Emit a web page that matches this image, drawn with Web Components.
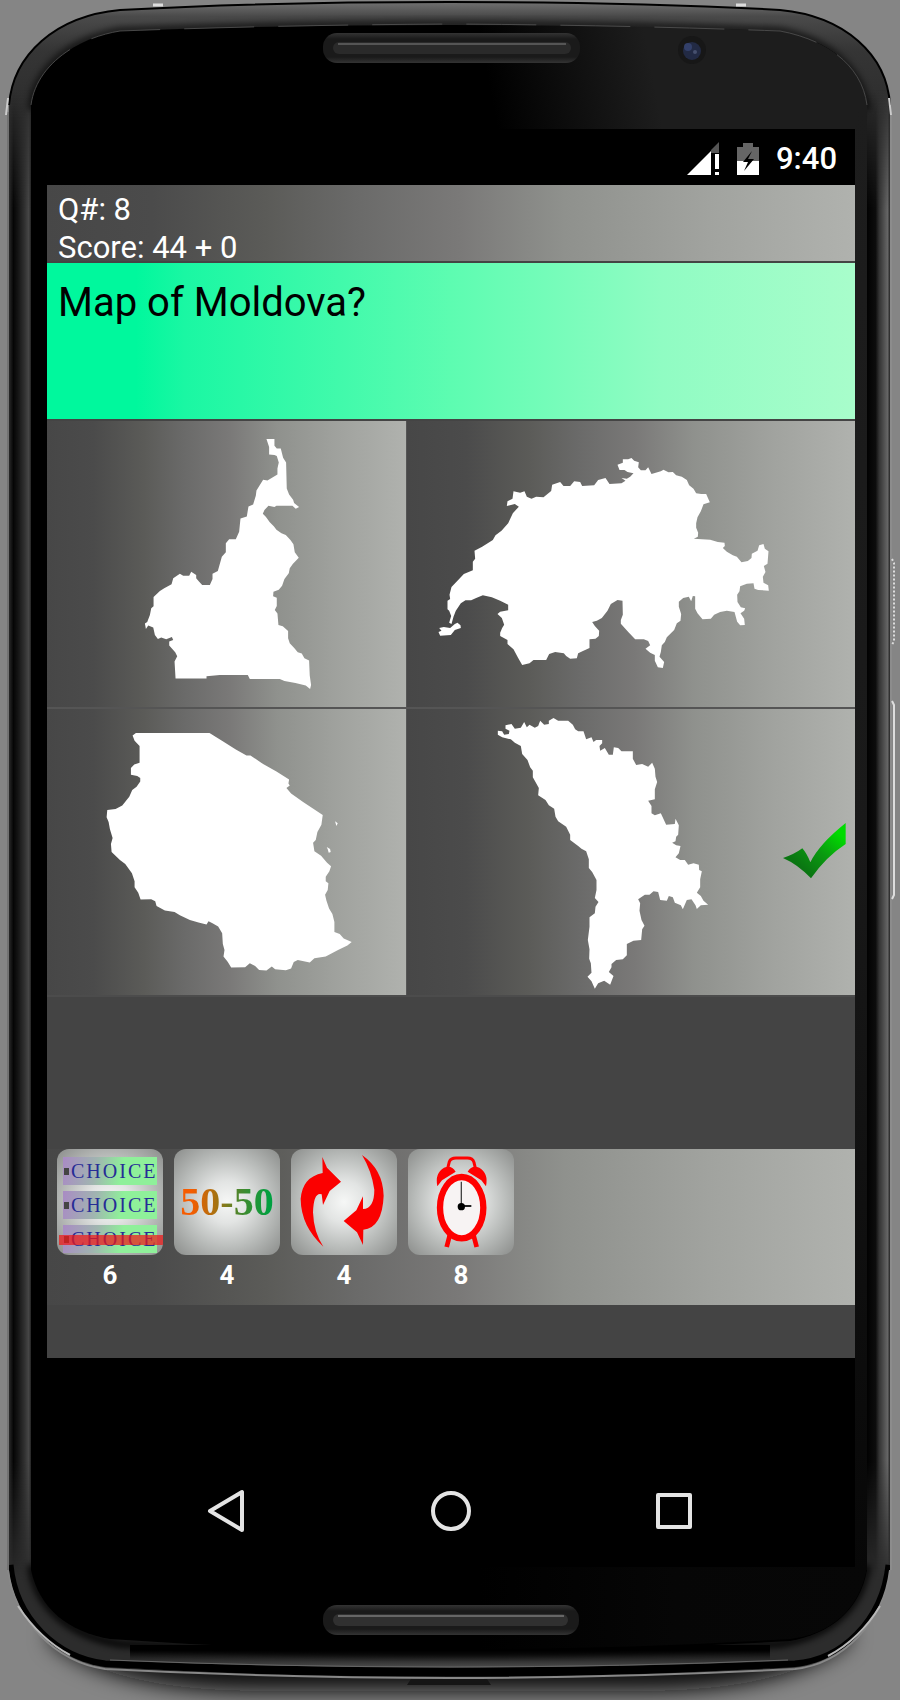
<!DOCTYPE html>
<html lang="en">
<head>
<meta charset="utf-8">
<title>Map quiz</title>
<style>
body { margin: 0; background: #858585; font-family: Roboto, "Liberation Sans", sans-serif; color: #fff; }
</style>
</head>
<body>
<phone-frame>
  <status-bar>9:40</status-bar>
  <quiz-app>
    <score-board slot="score" question="8" points="44" bonus="0"></score-board>
    <quiz-question slot="question">Map of Moldova?</quiz-question>
    <answer-grid slot="answers"></answer-grid>
    <tool-bar slot="tools">
      <tool-button label="Remove a choice" count="6" kind="choice"></tool-button>
      <tool-button label="Fifty-fifty" count="4" kind="half"></tool-button>
      <tool-button label="Swap question" count="4" kind="swap"></tool-button>
      <tool-button label="Extra time" count="8" kind="time"></tool-button>
    </tool-bar>
  </quiz-app>
  <nav-bar></nav-bar>
</phone-frame>

<script>
const GRAY = 'linear-gradient(90deg,#474747 0%,#4b4b4b 13%,#5b5b58 27%,#6a6a69 38%,#7a7978 51%,#8f918d 64%,#a1a39f 82%,#b0b2ae 100%)';
const RESET = ':host,*{box-sizing:border-box} button{appearance:none;border:0;padding:0;margin:0;background:none;color:inherit;font:inherit;cursor:pointer} svg{display:block}';

function define(name, render) {
  customElements.define(name, class extends HTMLElement {
    constructor() { super(); this.attachShadow({ mode: 'open' }); }
    connectedCallback() { this.shadowRoot.innerHTML = render(this); }
  });
}

define('phone-frame', () => `
<style>${RESET}
:host{display:block;position:relative;overflow:hidden}
.body{position:absolute;inset:0;width:100%;height:100%}
.screen{position:relative;display:flex;flex-direction:column;padding:129px 45px 133px 47px}
</style>
<svg class="body" viewBox="0 0 900 1700" preserveAspectRatio="none" aria-hidden="true">
  <defs>
    <filter id="b6" x="-20%" y="-100%" width="140%" height="300%"><feGaussianBlur stdDeviation="11"/></filter>
    <filter id="b3"><feGaussianBlur stdDeviation="3"/></filter>
    <linearGradient id="topband" x1="0" x2="0" y1="0" y2="1700" gradientUnits="userSpaceOnUse">
      <stop offset="0" stop-color="#777"/><stop offset=".0095" stop-color="#4a4a4a"/><stop offset=".03" stop-color="#353535"/><stop offset=".07" stop-color="#2c2c2c"/><stop offset="1" stop-color="#2c2c2c"/>
    </linearGradient>
    <linearGradient id="lside"><stop offset="0" stop-color="#2a2a2a"/><stop offset=".2" stop-color="#050505"/><stop offset=".4" stop-color="#141414"/><stop offset=".7" stop-color="#303030"/><stop offset=".9" stop-color="#474747"/><stop offset="1" stop-color="#222"/></linearGradient>
    <linearGradient id="rside"><stop offset="0" stop-color="#000"/><stop offset=".4" stop-color="#0c0c0c"/><stop offset=".55" stop-color="#333"/><stop offset=".9" stop-color="#666"/><stop offset="1" stop-color="#222"/></linearGradient>
    <linearGradient id="fade" x1="0" x2="0" y1="0" y2="1"><stop offset="0" stop-color="#000"/><stop offset=".08" stop-color="#fff"/><stop offset=".92" stop-color="#fff"/><stop offset="1" stop-color="#000"/></linearGradient>
    <mask id="sidefade"><rect x="0" y="90" width="900" height="1490" fill="url(#fade)"/></mask>
    <linearGradient id="sheen" x1="490" x2="650" y1="90" y2="60" gradientUnits="userSpaceOnUse"><stop offset="0" stop-color="#1d1d1d" stop-opacity="0"/><stop offset="1" stop-color="#1d1d1d"/></linearGradient>
    <linearGradient id="strip" x1="0" x2="0" y1="0" y2="1"><stop offset="0" stop-color="#1d1d1d"/><stop offset=".5" stop-color="#191919"/><stop offset="1" stop-color="#070707"/></linearGradient>
    <linearGradient id="chin"><stop offset="0" stop-color="#000"/><stop offset=".5" stop-color="#060606"/><stop offset="1" stop-color="#070707"/></linearGradient>
    <linearGradient id="slot" x1="0" x2="0" y1="0" y2="1"><stop offset="0" stop-color="#333"/><stop offset=".2" stop-color="#1a1a1a"/><stop offset=".8" stop-color="#1a1a1a"/><stop offset="1" stop-color="#333"/></linearGradient>
    <linearGradient id="lower" x1="0" x2="0" y1="1650" y2="1668" gradientUnits="userSpaceOnUse"><stop offset="0" stop-color="#000"/><stop offset="1" stop-color="#505050"/></linearGradient>
    <clipPath id="outer"><path d="M9 105C13 55 55 16 120 10Q260 2 450 2Q640 2 780 10C845 16 887 55 890 105V1570C884 1622 842 1662 795 1667Q620 1677 450 1677Q280 1677 105 1667C56 1660 14 1620 9 1570Z"/></clipPath>
  </defs>
  <rect width="900" height="1700" fill="#858585"/>
  <path d="M50 1640Q110 1691 260 1691H640Q790 1691 850 1640L830 1560H70Z" fill="#0a0a0a" filter="url(#b6)"/>
  <rect x="7" y="112" width="3" height="1458" fill="#727272"/><rect x="889" y="112" width="3" height="1458" fill="#8c8c8c"/>
  <path d="M9 105C13 55 55 16 120 10Q260 2 450 2Q640 2 780 10C845 16 887 55 890 105V1570C884 1622 842 1662 795 1667Q620 1677 450 1677Q280 1677 105 1667C56 1660 14 1620 9 1570Z" fill="url(#topband)"/>
  <g clip-path="url(#outer)">
    <g mask="url(#sidefade)"><rect x="9" y="90" width="22" height="1490" fill="url(#lside)"/><rect x="866" y="90" width="24" height="1490" fill="url(#rside)"/></g>
    <path d="M130 1645H770V1672H130Z" fill="url(#lower)"/>
    <path d="M890 1565C884 1622 842 1662 795 1665Q620 1672 450 1672Q280 1672 105 1665C56 1659 14 1620 9 1565" fill="none" stroke="#000" stroke-width="9"/>
    <path d="M867 110C862 70 828 40 780 31Q620 24 450 24Q280 24 120 31C72 40 36 66 31 110" fill="none" stroke="#000" stroke-width="8" opacity=".6" filter="url(#b3)"/>
    <path d="M867 1565C862 1608 828 1636 780 1644Q620 1652 450 1652Q280 1652 120 1644C72 1636 36 1608 31 1565" fill="none" stroke="#000" stroke-width="8" opacity=".8" filter="url(#b3)"/>
  </g>
  <path d="M31 105C36 66 76 38 120 31Q280 25 450 25Q620 25 780 31C828 40 862 66 867 105V1570C860 1610 830 1634 790 1641Q620 1651 450 1651Q280 1651 110 1639C68 1632 39 1608 31 1570Z" fill="#000"/>
  <path d="M480 26Q640 25 780 31C828 40 862 66 867 105V129H480Z" fill="url(#sheen)"/>
  <rect x="855" y="104" width="12" height="1466" fill="url(#strip)"/>
  <path d="M480 1567H867C860 1610 830 1634 790 1639Q620 1649 480 1649Z" fill="url(#chin)"/>
  <path d="M31 105C36 66 76 38 120 31Q280 25 450 24Q620 25 780 31C828 40 862 66 867 105" fill="none" stroke="#555" stroke-width="1" stroke-dasharray="70 24" opacity=".8"/>
  <path d="M9 105C13 55 55 16 120 10Q260 2 450 2Q640 2 780 10C845 16 887 55 890 105" fill="none" stroke="#000" stroke-width="2"/>
  <path d="M153 5h10M736 5h10" stroke="#ddd" stroke-width="3"/>
  <path d="M8 98L6 115M889 98l2 17" stroke="#ccc" stroke-width="2"/>
  <path d="M890 1570C884 1622 842 1664 795 1669Q620 1678 450 1678Q280 1678 105 1669C56 1662 14 1620 8 1570" fill="none" stroke="#888" stroke-width="2"/>
  <path d="M70 1655Q40 1639 18 1606M828 1656Q860 1639 880 1606" fill="none" stroke="#b8b8b8" stroke-width="2"/>
  <path d="M110 1660Q280 1667 450 1667Q620 1667 788 1660" fill="none" stroke="#666" stroke-width="1"/>
  <path d="M411 1679H487L491 1685H407Z" fill="#151515"/>
  <g><rect x="323" y="33" width="257" height="30" rx="14" fill="url(#slot)"/><rect x="333" y="42" width="238" height="12" rx="6" fill="#2a2a2a"/><path d="M338 44H566" stroke="#555" stroke-width="2"/></g>
  <g><rect x="323" y="1605" width="256" height="30" rx="14" fill="url(#slot)"/><rect x="333" y="1614" width="235" height="12" rx="6" fill="#303030"/><path d="M338 1616H564" stroke="#666" stroke-width="2"/></g>
  <circle cx="692" cy="50" r="14" fill="#171717"/><circle cx="692" cy="51" r="9" fill="#222a44"/><circle cx="688" cy="47" r="4" fill="#33406a"/><circle cx="695" cy="52" r="2" fill="#46506e"/>
  <g fill="none" stroke="#ddd" stroke-width="2"><path d="M892 559l2 4v78l-2 4" stroke-dasharray="2 2"/><path d="M892 701l2 4v190l-2 4"/></g>
</svg>
<main class="screen"><slot></slot></main>`);

define('status-bar', () => `
<style>${RESET}
:host{display:flex;justify-content:flex-end;align-items:center;gap:17px;height:56px;padding:4px 18px 0 0;background:#000;font-size:31px;line-height:36px;font-weight:500}
svg{height:34px}
</style>
<svg width="34" viewBox="0 0 34 34" role="img" aria-label="Mobile signal"><path d="M1 33L25 9V33Z" fill="#fff"/><path d="M25 8L33 0V11H28V33H25Z" fill="#555"/><path d="M25 11h3v22h-3z" fill="#000"/><path d="M29 12h4v15h-4zM29 30h4v3h-4z" fill="#fff"/></svg>
<svg width="22" viewBox="0 0 22 34" role="img" aria-label="Battery charging"><path d="M6 1h10v4h6v14H0V5h6z" fill="#666"/><path d="M0 19h22v14H0z" fill="#fff"/><path d="M15 9L6 20h5L7 29L17 17h-6z" fill="#000"/></svg>
<span><slot></slot></span>`);

define('quiz-app', () => `
<style>:host{display:block;background:#444}
.tools{padding:152px 0 53px}</style>
<slot name="score"></slot><slot name="question"></slot><slot name="answers"></slot>
<div class="tools"><slot name="tools"></slot></div>`);

define('score-board', el => `
<style>:host{display:block;height:78px;padding:6px 11px 0;border-bottom:2px solid #444;background:${GRAY};font-size:31px;line-height:38px;box-sizing:border-box}</style>
<div>Q#: ${el.getAttribute('question')}</div><div>Score: ${el.getAttribute('points')} + ${el.getAttribute('bonus')}</div>`);

define('quiz-question', () => `
<style>:host{display:block;height:158px;box-sizing:border-box;padding:16px 11px;border-bottom:2px solid #444;color:#000;background:linear-gradient(90deg,#00f89d 0%,#00f89d 11%,#1af7a3 17%,#5dfcb1 50%,#90fcc3 76%,#a8fdcb 100%)}
h1{margin:0;font-size:40px;line-height:48px;font-weight:400}</style>
<h1><slot></slot></h1>`);

define('answer-option', el => `
<style>${RESET}
:host{display:block;background:${GRAY}}
button{position:relative;display:block;width:100%;height:100%}
.map{width:100%;height:100%}
.tick{position:absolute;right:8px;top:113px}
</style>
<button type="button" aria-label="${el.getAttribute('label')}">
<svg class="map" viewBox="${el.getAttribute('box')}" fill="#fff" aria-hidden="true"><path d="${el.getAttribute('outline')}"/></svg>
${el.hasAttribute('correct') ? `<svg class="tick" width="64" height="58" viewBox="0 0 192 172" aria-hidden="true"><defs><linearGradient id="g" x1="0" y1="1" x2="1" y2="0"><stop offset=".25" stop-color="#0a7612"/><stop offset=".55" stop-color="#0a9c10"/><stop offset=".85" stop-color="#00dc00"/></linearGradient></defs><path fill="url(#g)" d="M0 107Q34 96 58 78Q72 94 82 120Q108 66 188 2V65Q128 104 84 168Q44 126 0 107Z"/></svg>` : ''}
</button>`);

const MAPS = [
  { label: 'Option A', box: '-249 -12 1077 858', d: 'M410 42H434V62L441 70H453L460 98L469 112L471 190L478 208L490 224L493 234L508 246L498 251L488 242H440L434 246L416 242L404 255L399 266L408 275L420 292L432 304L440 314L455 325L468 330L482 345L491 358L495 382L507 398L489 417L480 430L477 445L464 462L457 482L447 494L431 500L430 514L441 518V543L435 555L443 566L446 600L459 604L475 618V640L480 655L494 670L504 682L516 686L524 700L538 707L540 752L544 780L541 792L528 782L497 774L464 768L450 762H360L354 750H270L230 754V761H137L134 710L142 694L136 682L118 662V650L130 645L126 636L109 643L94 638L84 642L75 630L70 608L55 602L48 612L45 596L52 591L60 570L64 550L71 544V516L90 498L103 490L125 478L130 460L150 446L160 452H178L184 440L199 450V460L208 470L217 480H240L248 462V446L264 438L268 424L276 395L288 382V355L298 343H318L328 320L332 280L351 274L356 244L370 238L378 212L380 196L400 164L413 166L443 148V130L447 112L441 93L434 90L418 88V66Z' },
  { label: 'Option B', box: '-39 -57 1344 858', d: 'M592 74L608 68V58H624L634 54L642 62L656 67L654 82L662 91H676L684 82L694 102L722 94L730 89L745 97L758 96L768 106L785 110L800 120L807 136L820 146L828 160L843 162L858 162L869 187L850 193L842 214L832 232L828 250V263L834 278L833 290L821 296L845 298L870 299L893 306L913 308L914 318L908 324L920 335L938 346L950 350L964 367L983 363L994 354L995 341L1012 332L1017 316L1030 312L1034 326L1045 334L1042 371L1031 378L1036 396L1028 410L1030 428L1044 436L1046 452L1014 450L1003 446L1000 430L980 431L960 439L958 454L951 464L952 486L962 502L975 505L972 512L961 520L972 536L974 555L960 556L951 545L943 516L920 512L900 516L882 524L872 536L847 538L832 520L825 506V469L818 468L813 484L806 470L789 474L776 485V500L783 522L781 542L770 550L762 570L740 592L734 606L725 616L722 636L718 650L732 666L728 684L713 682L704 662V645L690 638L676 626L690 616L684 603L671 598L645 598L625 577L602 551V540L608 524L607 482L592 480L572 492L562 512L545 534L530 542L516 546L524 558L537 572L536 588L526 596L508 598L508 624L490 632L474 640L470 655L450 656L438 648L431 640L405 636L387 642L378 660H340L328 670L306 675L294 654L280 628L262 612V600L240 588V578L246 564L252 554L245 534L232 522L240 515L264 511V494L252 488L240 482L215 472L188 466L168 474L153 481H136L122 490L107 512L100 530L94 552L87 548L93 528L87 512L82 508V482L90 477L88 464L94 441L114 420L131 402L158 391V365L165 356L163 332L186 320L205 308L218 300L226 286L244 272L264 250L278 220L296 200L284 192L260 198L262 184L277 176L280 154L300 158L313 154L320 170L334 176L348 170L370 172L393 153L396 134L420 126L430 138L450 138L462 124L480 126L486 138L522 136L534 120L556 114L568 132L604 130L616 122L604 114L620 116L630 110L640 100L622 96L613 90H598ZM57 564L71 561L90 564L104 552L112 548L121 556L122 564L104 570L92 585L60 587L55 576L64 572Z' },
  { label: 'Option C', box: '-129 -3 1077 858', d: 'M128 76L138 69H359L400 94L438 118L470 136L482 136L520 162L560 184L598 208L596 220L600 226L590 234L604 250L640 276L699 315L695 344L683 366L678 390L670 398L674 424L694 437L712 458L724 469L719 484L708 500V514L716 520L714 540L706 554L710 572L718 596L728 612L734 636V666L750 672L762 686L786 696L773 707L745 720L708 740L674 745L660 758L624 750L612 756L604 776L588 781L556 778L546 770L530 782L508 780L496 768L480 760L466 772L424 773L414 756L401 740L404 720L399 702L397 670L385 650L368 640L356 634L350 644L326 638L300 630L270 616L254 606L225 602L200 588L196 574L184 568L152 569L145 548L134 532V514L126 490L106 462L90 450L65 426L63 402L68 384L60 358L56 336L50 322L52 300L77 297L97 286L118 260L127 240L140 230L151 214V204L142 198L123 194V174L133 163L149 158V108L134 92ZM736 334l8 6l-4 8zM711 411l10 6l2 9l-6 2l-3-10z' },
  { label: 'Option D', box: '-219 27 1344 858', correct: true, d: 'M53 92L66 94L72 104L86 102L88 92L76 86V76L94 72L104 86L122 83L132 66L140 82L148 74L164 83L174 78L180 62L192 74L206 72L206 62L220 54L234 62L264 62L278 74L285 88L294 94H310L318 118L334 112L340 126L348 120H366V130L358 138L360 152L374 144L386 164H398L401 142L414 144L424 154L458 154V176L468 195L486 192L504 200L516 188L524 206L526 230L531 246L524 268V298L504 302L514 318V340L524 346L542 340L558 374L584 372L586 356L596 376L594 404L588 410L586 424L576 428L588 436L601 438L596 460L586 472L600 480L614 480L624 494L640 490L656 494L657 510L665 514L660 538V562L650 578L662 588L670 602L684 614L662 616L650 627L646 616L634 598L620 600L608 628L602 616L584 608L578 592L566 588L560 602L540 600L534 576L520 574L508 584L494 584L474 598L480 610L478 632L484 660L493 677L486 688L483 720L460 722L440 732V766L428 778L408 780L394 792V802L386 816L400 828L390 854L372 842L354 850L344 866L334 844L322 830L334 818L332 790L327 776L328 748L323 720L328 680V652L344 640L346 620L355 606L344 594L349 570V540L336 516L326 504V478L318 454L304 446L294 438L270 420V404L258 380L234 364L226 350L222 326L206 316L196 300L174 286L176 264L158 232L158 212L150 202L142 180L126 162L122 138L104 128L92 118L66 112L53 104Z' }
];

define('answer-grid', () => `
<style>:host{display:grid;grid-template-columns:4fr 5fr;grid-auto-rows:286px;gap:2px 1px;background:#555;border-bottom:2px solid #4c4c4c}</style>
${MAPS.map(m => `<answer-option label="${m.label}" box="${m.box}" outline="${m.d}" ${m.correct ? 'correct' : ''}></answer-option>`).join('')}`);

define('tool-bar', () => `
<style>:host{display:flex;gap:11px;height:156px;padding:0 10px;box-sizing:border-box;background:${GRAY}}</style><slot></slot>`);

const ART = {
  choice: `<span class="choices"><span>CHOICE</span><span>CHOICE</span><span>CHOICE</span><i></i></span>`,
  half: `<span class="half">50-50</span>`,
  swap: `<svg width="106" height="106" viewBox="0 0 318 318" fill="#fb0000" aria-hidden="true"><path d="M94 24L108 56L150 98L116 126L96 168L92 136Q68 128 66 190Q68 250 97 293Q30 232 29 150Q34 84 95 72Z"/><path d="M213 18Q276 62 278 140Q274 236 217 242L216 288L198 250L158 216L196 184L216 142V180Q250 178 250 122Q242 66 213 18Z"/></svg>`,
  time: `<svg width="106" height="106" viewBox="0 0 318 318" aria-hidden="true"><path d="M117 66L124 38Q128 27 144 27H178Q194 27 198 40L204 66" fill="none" stroke="red" stroke-width="9"/><path d="M88 112Q80 72 108 56Q130 46 143 68L102 94Z M234 112Q242 72 214 56Q192 46 179 68L220 94Z" fill="red"/><path d="M126 256L116 294M196 256l10 38" stroke="red" stroke-width="14"/><ellipse cx="161" cy="176" rx="65" ry="92" fill="#f7f3f3" stroke="red" stroke-width="19"/><path d="M160 98V172" stroke="#444" stroke-width="4"/><path d="M160 171H190" stroke="#222" stroke-width="6"/><circle cx="160" cy="173" r="11"/></svg>`
};

define('tool-button', el => `
<style>${RESET}
:host{display:block;flex:none;width:106px}
button{display:block;width:100%;text-align:center}
.tile{display:flex;align-items:center;justify-content:center;height:106px;border-radius:12px;overflow:hidden;background:radial-gradient(circle,#f6f7f6 0%,#e2e4e3 28%,#b8bbb9 62%,#8a8c8a 100%)}
.count{display:block;padding-top:4px;font-size:26px;line-height:32px;font-weight:700}
.choices{position:relative;display:flex;flex-direction:column;gap:6px;width:100%;height:100%;padding:8px 6px 4px;font:20px/28px "Liberation Serif",serif;letter-spacing:2px;color:#262c96}
.choices span{display:flex;flex:1;align-items:center;white-space:nowrap;background:linear-gradient(100deg,#a98bc4 0%,#a0b5b0 35%,#8ff09a 62%)}
.choices span::before{content:"";flex:none;width:5px;height:7px;margin:0 2px 0 1px;background:#444}
.choices i{position:absolute;left:2px;right:0;bottom:10px;height:10px;background:#f01818b8}
.half{font:700 40px/48px "Liberation Serif",serif;color:transparent;background:linear-gradient(90deg,#f65c00 12%,#a87210 38%,#4c862c 62%,#00a040 95%);-webkit-background-clip:text;background-clip:text}
</style>
<button type="button" aria-label="${el.getAttribute('label')}, ${el.getAttribute('count')} left"><span class="tile">${ART[el.getAttribute('kind')]}</span><span class="count">${el.getAttribute('count')}</span></button>`);

define('nav-bar', () => `
<style>${RESET}
:host{display:block;background:#000;padding:100px 101px 4px}
nav{display:flex;justify-content:space-between}
button{display:grid;place-items:center;width:160px;height:105px}
svg{fill:none;stroke:#e4e4e4;stroke-width:4;stroke-linejoin:round}
</style>
<nav aria-label="System">
<button type="button" aria-label="Back"><svg width="44" height="44" viewBox="0 0 44 44"><path d="M36 3V41L4 22Z"/></svg></button>
<button type="button" aria-label="Home"><svg width="44" height="44" viewBox="0 0 44 44"><circle cx="22" cy="22" r="18"/></svg></button>
<button type="button" aria-label="Recent apps"><svg width="44" height="44" viewBox="0 0 44 44"><rect x="6" y="6" width="32" height="32"/></svg></button>
</nav>`);
</script>
</body>
</html>
